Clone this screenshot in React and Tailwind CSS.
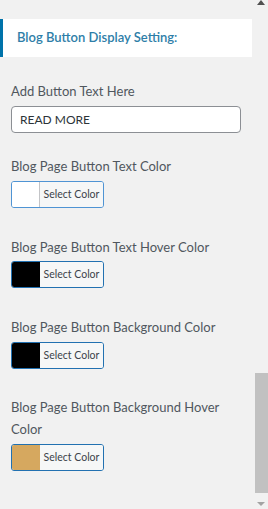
import React from "react";

function ColorButton({ color, light }) {
  return (
    <div
      className={`flex h-[27px] w-[93px] overflow-hidden rounded-[3px] border ${
        light ? "border-[#4f94d4]" : "border-[#2271b1]"
      }`}
    >
      <div
        className={`h-full w-[28px] shrink-0 ${light ? "border-r border-[#c3c4c7]" : ""}`}
        style={{ backgroundColor: color }}
      />
      <div className="flex flex-1 items-center justify-center bg-[#f6f7f7] text-[10.5px] text-[#3c434a]">
        Select Color
      </div>
    </div>
  );
}

function Label({ children }) {
  return <div className="text-[13px] leading-[22px] text-[#50575e]">{children}</div>;
}

export default function App() {
  return (
    <div
      className="flex h-[509px] w-[268px] overflow-hidden bg-[#f1f1f1]"
      style={{ fontFamily: 'Lato, "Noto Sans", sans-serif' }}
    >
      <div className="flex w-[254px] shrink-0 flex-col pt-[19px]">
        <div className="flex h-[38px] w-[252px] items-center border-l-[3px] border-[#0073aa] bg-white pl-[14px] text-[13px] font-semibold text-[#2e7ea8]">
          Blog Button Display Setting:
        </div>
        <div className="flex flex-col pl-[11px] pr-[13px] pt-[23px]">
          <Label>Add Button Text Here</Label>
          <div className="mt-[4px] flex h-[27px] w-[230px] items-center rounded-[4px] border border-[#8c8f94] bg-white pl-[8px] text-[12px] text-[#2c3338]">
            READ MORE
          </div>
          <div className="mt-[22px]">
            <Label>Blog Page Button Text Color</Label>
          </div>
          <div className="mt-[4px]">
            <ColorButton color="#ffffff" light />
          </div>
          <div className="mt-[28px]">
            <Label>Blog Page Button Text Hover Color</Label>
          </div>
          <div className="mt-[3px]">
            <ColorButton color="#000000" />
          </div>
          <div className="mt-[28px]">
            <Label>Blog Page Button Background Color</Label>
          </div>
          <div className="mt-[4px]">
            <ColorButton color="#000000" />
          </div>
          <div className="mt-[27px]">
            <Label>Blog Page Button Background Hover Color</Label>
          </div>
          <div className="mt-[4px]">
            <ColorButton color="#d6a85f" />
          </div>
        </div>
      </div>
      <div className="flex w-[14px] flex-col items-center">
        <svg width="8" height="6" viewBox="0 0 8 6" className="mt-0">
          <polygon points="0,5 8,5 4,0" fill="#505050" />
        </svg>
        <div className="mt-[367px] h-[120px] w-[13px] bg-[#c1c1c1]" />
        <svg width="8" height="5" viewBox="0 0 8 5" className="mt-[9px]">
          <polygon points="0,0 8,0 4,4" fill="#a3a3a3" />
        </svg>
      </div>
    </div>
  );
}
